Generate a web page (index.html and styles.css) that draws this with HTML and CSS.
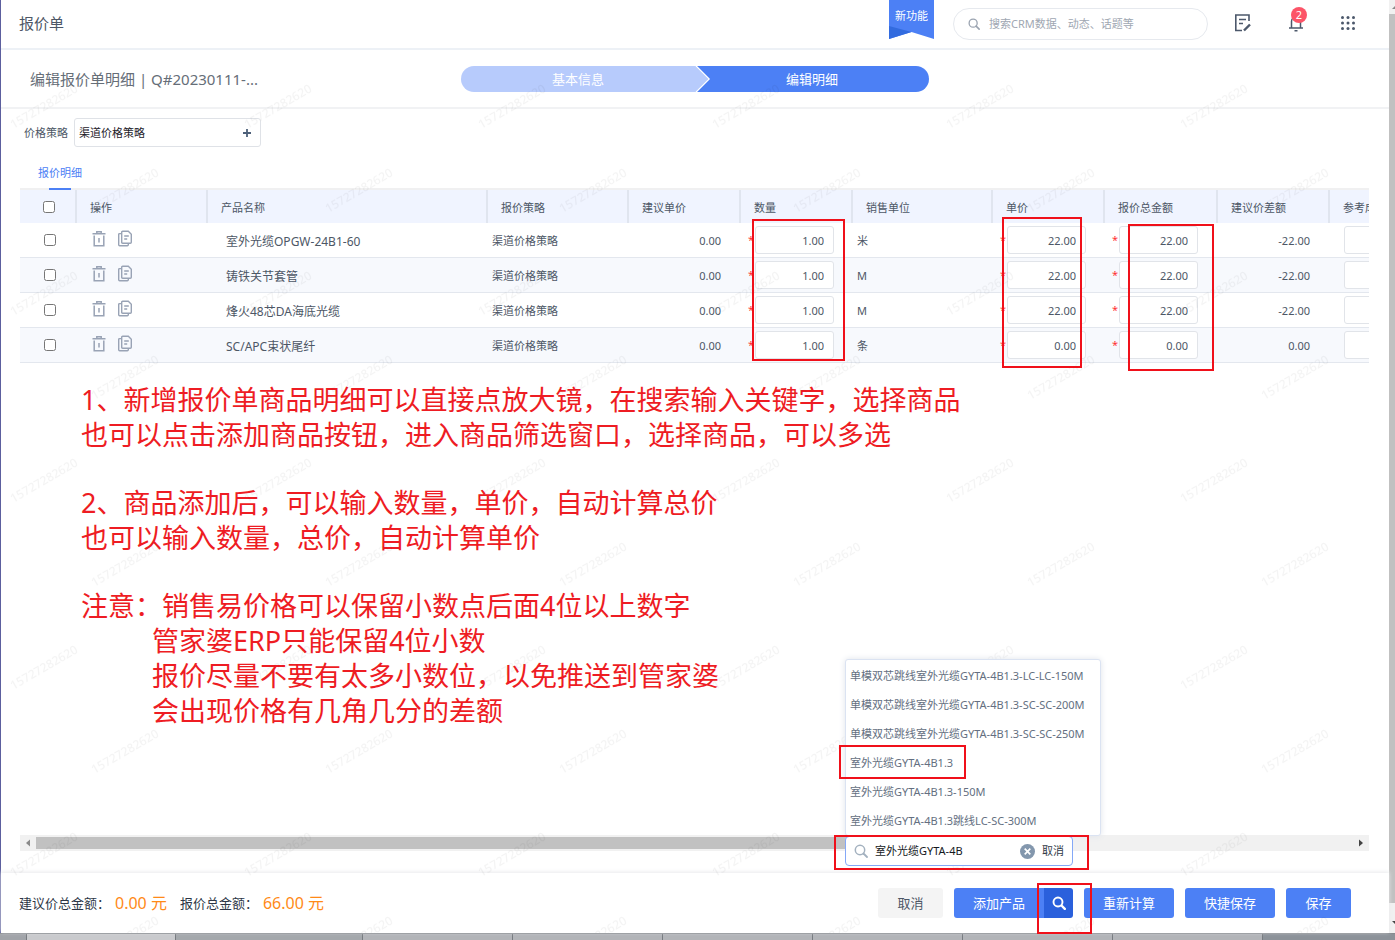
FILE: index.html
```html
<!DOCTYPE html>
<html lang="zh-CN">
<head>
<meta charset="utf-8">
<title>报价单</title>
<link rel="stylesheet" href="styles.css">
</head>
<body>
<svg class="defs" width="0" height="0" aria-hidden="true">
  <symbol id="trash" viewBox="0 0 14 17"><path d="M0.5 3.8h13M4.8 3.5V1.8h4.4v1.7M2.2 5.500v10.300h9.600V5.500M7 8v4.500" fill="none" stroke="#99a3b5" stroke-width="1.500"/></symbol>
  <symbol id="copy" viewBox="0 0 14 17"><path d="M3.700 2.200q0-1 1-1h5.600l3 3v8q0 1-1 1H4.700q-1 0-1-1zM3.500 3.600H1.700q-1 0-1 1v10.200q0 1 1 1h7.600q1 0 1-1v-1.500M6.200 6h4.600M6.200 9h3" fill="none" stroke="#99a3b5" stroke-width="1.400"/></symbol>
  <symbol id="lens" viewBox="0 0 14 14"><circle cx="6" cy="6" r="4.700" fill="none" stroke="currentColor" stroke-width="1.500"/><path d="M9.500 9.500l3.500 3.500" stroke="currentColor" stroke-width="1.800" stroke-linecap="round"/></symbol>
  <symbol id="lens-bold" viewBox="0 0 14 14"><circle cx="6" cy="6" r="4.500" fill="none" stroke="currentColor" stroke-width="1.900"/><path d="M9.500 9.500l3.300 3.300" stroke="currentColor" stroke-width="2.400" stroke-linecap="round"/></symbol>
</svg>
<div class="window">
  <div class="page">
    <header class="topbar">
      <h1 class="topbar-title">报价单</h1>
      <a class="ribbon" href="#">
        <svg width="45" height="39" aria-hidden="true"><path d="M0 0h45v39L22.500 32 0 39z" fill="#4c80f5"/><path d="M0 26l22.500 6L0 39z" fill="#326bdf"/></svg>
        <span>新功能</span>
      </a>
      <label class="global-search">
        <svg width="12" height="12" aria-hidden="true"><use href="#lens"/></svg>
        <input type="text" placeholder="搜索CRM数据、动态、话题等" aria-label="搜索">
      </label>
      <button class="icon-btn note" type="button" aria-label="记录">
        <svg width="18" height="18" viewBox="0 0 18 18" fill="none" stroke="#4c586b" stroke-width="1.600"><path d="M15 7V1H1.800v15.500H8M5 5.500h7M5 9.500h4"/><path d="M10 16.500l6-6" stroke-width="2.400"/></svg>
      </button>
      <button class="icon-btn bell" type="button" aria-label="通知">
        <svg width="16" height="18" viewBox="0 0 16 18" fill="none" stroke="#4c586b" stroke-width="1.500"><path d="M3.500 13.700V7.500a4.500 4.500 0 0 1 9 0v6.200M1 14h14M6.500 16.700h3"/></svg>
        <span class="badge">2</span>
      </button>
      <button class="icon-btn" type="button" aria-label="应用">
        <svg width="16" height="16" viewBox="0 0 16 16" fill="#4c586b"><circle cx="2.500" cy="2.500" r="1.500"/><circle cx="8" cy="2.500" r="1.500"/><circle cx="13.500" cy="2.500" r="1.500"/><circle cx="2.500" cy="8" r="1.500"/><circle cx="8" cy="8" r="1.500"/><circle cx="13.500" cy="8" r="1.500"/><circle cx="2.500" cy="13.500" r="1.500"/><circle cx="8" cy="13.500" r="1.500"/><circle cx="13.500" cy="13.500" r="1.500"/></svg>
      </button>
    </header>

    <section class="stepbar">
      <h2 class="doc-title">编辑报价单明细 | Q#20230111-...</h2>
      <ol class="steps">
        <li class="step">基本信息
          <svg class="chevron" width="16" height="26" aria-hidden="true"><path d="M0 0l13 13L0 26z" fill="#b7cbfc"/><path d="M0 -1l14 14L0 27" fill="none" stroke="#fff" stroke-width="1.500"/></svg>
        </li>
        <li class="step current">编辑明细</li>
      </ol>
    </section>

    <main class="content">
      <div class="policy">
        <label for="policy">价格策略</label>
        <div class="policy-box">
          <input id="policy" type="text" value="渠道价格策略">
          <button type="button" aria-label="展开"><svg width="8" height="8" viewBox="0 0 8 8"><path d="M4 0v8M0 4h8" stroke="#4d6079" stroke-width="1.800"/></svg></button>
        </div>
      </div>
      <nav class="tabs"><a class="tab" href="#">报价明细</a></nav>

      <div class="grid-area">
        <div class="grid-clip">
          <table class="grid">
            <colgroup><col class="c-check"><col class="c-ops"><col class="c-name"><col class="c-policy"><col class="c-num"><col class="c-num"><col class="c-unit"><col class="c-num"><col class="c-diff"><col class="c-num"><col class="c-num"></colgroup>
            <thead>
              <tr><th class="check"><input type="checkbox" aria-label="全选"></th><th>操作</th><th>产品名称</th><th>报价策略</th><th>建议单价</th><th>数量</th><th>销售单位</th><th>单价</th><th>报价总金额</th><th>建议价差额</th><th>参考成本</th></tr>
            </thead>
            <tbody></tbody>
          </table>
        </div>
        <div class="mark mark-qty"></div>
        <div class="mark mark-price"></div>
        <div class="mark mark-total"></div>
      </div>

      <div class="notes">
        <p>1、新增报价单商品明细可以直接点放大镜，在搜索输入关键字，选择商品<br>也可以点击添加商品按钮，进入商品筛选窗口，选择商品，可以多选</p>
        <p>2、商品添加后，可以输入数量，单价，自动计算总价<br>也可以输入数量，总价，自动计算单价</p>
        <p>注意：销售易价格可以保留小数点后面4位以上数字<span class="sub">管家婆ERP只能保留4位小数<br>报价尽量不要有太多小数位，以免推送到管家婆<br>会出现价格有几角几分的差额</span></p>
      </div>

      <div class="hscroll">
        <svg width="16" height="16" aria-hidden="true"><path d="M10 4.500v7L6 8z" fill="#8a8a8a"/></svg>
        <div class="hthumb"></div>
        <svg width="16" height="16" aria-hidden="true"><path d="M6 4.500v7L10 8z" fill="#444"/></svg>
      </div>
    </main>

    <footer class="footer">
      <div class="totals">
        <span>建议价总金额：</span><strong>0.00 元</strong>
        <span>报价总金额：</span><strong>66.00 元</strong>
      </div>
      <div class="actions">
        <button class="btn plain" type="button">取消</button>
        <div class="split">
          <button class="btn add" type="button">添加产品</button>
          <button class="btn find" type="button" aria-label="搜索产品"><svg width="14" height="14"><use href="#lens-bold"/></svg></button>
          <div class="mark mark-find"></div>
          <div class="lookup">
            <ul class="options">
              <li>单模双芯跳线室外光缆GYTA-4B1.3-LC-LC-150M</li>
              <li>单模双芯跳线室外光缆GYTA-4B1.3-SC-SC-200M</li>
              <li>单模双芯跳线室外光缆GYTA-4B1.3-SC-SC-250M</li>
              <li>室外光缆GYTA-4B1.3<div class="mark mark-option"></div></li>
              <li>室外光缆GYTA-4B1.3-150M</li>
              <li>室外光缆GYTA-4B1.3跳线LC-SC-300M</li>
            </ul>
            <div class="lookup-box">
              <svg width="14" height="14" aria-hidden="true"><use href="#lens"/></svg>
              <input type="text" value="室外光缆GYTA-4B" aria-label="产品关键字">
              <button type="button" aria-label="清除"><svg width="15" height="15" viewBox="0 0 15 15"><circle cx="7.500" cy="7.500" r="7.500" fill="#8397ad"/><path d="M4.700 4.700l5.600 5.600M10.300 4.700l-5.600 5.600" stroke="#fff" stroke-width="1.700"/></svg></button>
              <button type="button">取消</button>
              <div class="mark mark-lookup"></div>
            </div>
          </div>
        </div>
        <button class="btn" type="button">重新计算</button>
        <button class="btn" type="button">快捷保存</button>
        <button class="btn save" type="button">保存</button>
      </div>
    </footer>
    <svg class="watermark" width="100%" height="100%" aria-hidden="true">
      <defs>
        <pattern id="wm" x="0" y="0" width="234" height="187" patternUnits="userSpaceOnUse">
          <text class="wm-text" transform="translate(45 60) rotate(-30)">15727282620</text>
          <text class="wm-text" transform="translate(126 144) rotate(-30)">15727282620</text>
        </pattern>
      </defs>
      <rect width="100%" height="100%" fill="url(#wm)"/>
    </svg>
  </div>
  <div class="vscroll">
    <svg width="8" height="14" aria-hidden="true"><path d="M3 9l4-4 4 4z" fill="#8a8a8a"/></svg>
    <div class="vthumb"></div>
    <svg width="8" height="30" aria-hidden="true"><path d="M3 18h8l-4 4z" fill="#444"/></svg>
  </div>
</div>
<div class="taskbar"><i class="edge"></i><i class="lit"></i><i class="wide"></i><i></i><i></i><i></i><i></i><i></i><i></i><i class="rest"></i></div>
<script src="app.js"></script>
</body>
</html>
```
FILE: styles.css
```css
* { box-sizing: border-box; }
body {
  margin: 0;
  height: 100vh;
  display: flex;
  flex-direction: column;
  overflow: hidden;
  background: #fff;
  color: #4d5766;
  font: 11px/16px "Noto Sans", "Noto Sans CJK SC", sans-serif;
}
button, input { font: inherit; color: inherit; }
button { border: 0; padding: 0; background: none; cursor: pointer; }
input[type="text"] { border: 0; padding: 0; outline: 0; min-width: 0; background: none; }
svg { display: block; flex: none; }
ul, ol { list-style: none; margin: 0; padding: 0; }
a { color: inherit; text-decoration: none; }
.defs { position: absolute; }
.window { flex: 1; min-height: 0; display: flex; }
.page {
  position: relative;
  flex: 1;
  min-width: 0;
  display: flex;
  flex-direction: column;
  border-left: 1px solid #5c5f9e;
}

.topbar {
  display: flex;
  align-items: center;
  height: 50px;
  padding: 0 33px 3px 18px;
  border-bottom: 2px solid #edf1f6;
}
.topbar-title { flex: 1; margin: 0; font-size: 15px; font-weight: 400; line-height: 20px; }
.ribbon { position: relative; align-self: flex-start; margin-right: 19px; color: #fff; }
.ribbon span { position: absolute; top: 8px; left: 0; width: 100%; text-align: center; }
.global-search {
  display: flex;
  align-items: center;
  gap: 9px;
  width: 255px;
  height: 32px;
  margin: 3px 26px 0 0;
  padding: 0 14px;
  border: 1px solid #e6e9ee;
  border-radius: 16px;
  color: #9aa3b0;
}
.global-search input { flex: 1; }
.global-search input::placeholder { color: #a0a7b2; opacity: 1; }
.icon-btn { position: relative; margin-right: 36px; }
.icon-btn:last-child { margin-right: 0; }
.badge {
  position: absolute;
  top: -7px;
  left: 3px;
  width: 16px;
  height: 16px;
  border-radius: 8px;
  background: #fc5468;
  color: #fff;
}

.stepbar {
  position: relative;
  display: flex;
  align-items: center;
  justify-content: center;
  height: 59px;
  border-bottom: 2px solid #f1f2f4;
}
.doc-title {
  position: absolute;
  left: 29px;
  margin: 0;
  color: #666e78;
  font-size: 15px;
  font-weight: 400;
  line-height: 20px;
}
.steps { display: flex; width: 468px; color: #fff; font-size: 13px; line-height: 26px; text-align: center; }
.step { position: relative; flex: 1; border-radius: 13px 0 0 13px; background: #b7cbfc; }
.step.current { border-radius: 0 13px 13px 0; background: #4c80f5; }
.chevron { position: absolute; top: 0; right: -16px; z-index: 1; }

.content { flex: 1; min-height: 0; display: flex; flex-direction: column; padding: 9px 20px 22px 19px; }
.policy { display: flex; align-items: center; gap: 6px; padding-left: 4px; }
.policy-box {
  display: flex;
  width: 187px;
  height: 29px;
  padding: 0 9px 0 4px;
  border: 1px solid #dfe2e7;
  border-radius: 3px;
  color: #1d2128;
}
.policy-box input { flex: 1; }
.tabs { height: 43px; padding: 17px 0 0 18px; border-bottom: 2px solid #f0f0f1; }
.tab { position: relative; display: inline-block; height: 26px; line-height: 18px; color: #4c80f5; }
.tab::after { content: ""; position: absolute; left: 11px; right: 11px; bottom: 0; height: 2px; background: #4c80f5; }

.grid-area { position: relative; }
.grid-clip { overflow: hidden; }
.grid { width: 1422px; table-layout: fixed; border-collapse: separate; border-spacing: 0; }
.c-check { width: 57px; }
.c-ops { width: 131px; }
.c-name { width: 280px; }
.c-policy { width: 141px; }
.c-num { width: 112px; }
.c-unit { width: 140px; }
.c-diff { width: 113px; }
.grid th {
  height: 33px;
  padding: 2px 0 0 13px;
  border-right: 2px solid #e0e5ef;
  background: #f0f4ff;
  font-weight: 400;
  text-align: left;
}
.grid td { height: 35px; padding: 2px 0 0 4px; border-bottom: 1px solid #e3e7ee; }
.grid tr:nth-child(even) td { background: #f7f9fd; }
.grid .check { padding: 0 0 2px 3px; text-align: center; }
.check input { width: 12px; height: 12px; margin: 0; vertical-align: middle; }
.grid .name { padding: 4px 0 0 18px; font-size: 12px; }
.grid .amount { padding-right: 20px; text-align: right; }
.ops { display: flex; gap: 12px; padding: 0 0 4px 11px; }
.grid .entry { padding-top: 0; }
.field { display: flex; align-items: center; gap: 2px; padding-left: 3px; }
.field::before { content: "*"; width: 5px; color: #f33; }
.field.optional::before { content: ""; }
.grid .field input {
  width: 79px;
  height: 28px;
  padding-right: 9px;
  border: 1px solid #e1e4e9;
  border-radius: 3px;
  background: #fff;
  text-align: right;
}

.mark { position: absolute; z-index: 5; border: 2px solid #f0101a; pointer-events: none; }
.mark-qty { left: 732px; top: 29px; width: 93px; height: 142px; }
.mark-price { left: 982px; top: 27px; width: 80px; height: 151px; }
.mark-total { left: 1108px; top: 34px; width: 86px; height: 147px; }

.notes { padding: 19px 0 0 61px; color: #ee1c23; font-size: 27px; line-height: 35px; white-space: nowrap; }
.notes p { margin: 0 0 33px; }
.notes .sub { display: block; padding-left: 71px; }

.hscroll { display: flex; height: 16px; margin-top: auto; background: #f1f1f1; }
.hthumb { width: 62%; height: 12px; margin: 2px auto 2px 0; background: #c1c1c1; }

.footer {
  display: flex;
  align-items: center;
  justify-content: space-between;
  height: 60px;
  padding: 0 38px 0 18px;
  box-shadow: 0 -1px 4px #e9eaec;
}
.totals { display: flex; align-items: center; color: #2e3747; font-size: 13px; white-space: nowrap; }
.totals strong { margin: 0 13px 0 5px; color: #ff8a17; font-size: 16px; font-weight: 400; }
.actions { display: flex; gap: 11px; }
.btn { width: 90px; height: 30px; border-radius: 3px; background: #4c80f5; color: #fff; font-size: 13px; }
.btn.plain { width: 65px; background: #f4f4f4; color: #4d5766; }
.btn.save { width: 65px; }
.split { position: relative; display: flex; }
.btn.add { border-radius: 3px 0 0 3px; }
.btn.find { display: grid; place-items: center; width: 29px; border-radius: 0 3px 3px 0; background: #2a60dc; }
.mark-find { right: -19px; top: -5px; width: 55px; height: 51px; }

.lookup { position: absolute; right: 0; bottom: 52px; z-index: 5; width: 228px; color: #646f81; }
.options {
  width: 256px;
  padding: 1px 0 0;
  border: 1px solid #dbe3f2;
  border-radius: 3px;
  background: #fff;
  box-shadow: 0 0 6px #dfe3ea;
}
.options li { position: relative; padding-left: 4px; line-height: 29px; white-space: nowrap; }
.mark-option { left: -7px; top: -3px; width: 127px; height: 34px; }
.lookup-box {
  position: relative;
  display: flex;
  align-items: center;
  gap: 7px;
  height: 30px;
  padding: 0 8px 0 8px;
  border: 1px solid #84a8f7;
  border-radius: 4px;
  background: #fff;
  color: #313a48;
}
.lookup-box > svg { color: #a3b1bf; }
.lookup-box input { flex: 1; color: #15181d; }
.mark-lookup { left: -12px; top: -2px; width: 255px; height: 35px; }

.watermark { position: absolute; left: 0; top: 50px; height: calc(100% - 50px); z-index: 4; pointer-events: none; }
.wm-text { fill: #000; fill-opacity: .045; font-size: 12px; font-weight: 500; text-anchor: middle; }

.vscroll { display: flex; flex-direction: column; width: 6px; overflow: hidden; background: #f1f1f1; }
.vthumb { flex: 1; background: #c1c1c1; }
.taskbar { display: flex; height: 7px; border-top: 1px solid #868a8f; background: #8c9299; }
.taskbar i { width: 150px; border-right: 1px solid #777b80; background: #b2b4b8; }
.taskbar .edge { width: 27px; background: #a1a4a9; }
.taskbar .lit { width: 149px; background: #c9cacd; }
.taskbar .wide { width: 187px; background: #a4a8ac; }
.taskbar .rest { flex: 1; border: 0; background: #8c9299; }
```
FILE: app.js
```js
const rows = [
  ["室外光缆OPGW-24B1-60", "米", "22.00", "-22.00"],
  ["铸铁关节套管", "M", "22.00", "-22.00"],
  ["烽火48芯DA海底光缆", "M", "22.00", "-22.00"],
  ["SC/APC束状尾纤", "条", "0.00", "0.00"]
];
const field = (label, value) =>
  `<td class="entry"><div class="field"><input type="text" aria-label="${label}" value="${value}"></div></td>`;
document.querySelector(".grid tbody").innerHTML = rows.map(([name, unit, price, diff]) => `
  <tr>
    <td class="check"><input type="checkbox" aria-label="选择${name}"></td>
    <td class="entry"><div class="ops">
      <button type="button" aria-label="删除"><svg width="14" height="17"><use href="#trash"/></svg></button>
      <button type="button" aria-label="复制"><svg width="14" height="17"><use href="#copy"/></svg></button>
    </div></td>
    <td class="name">${name}</td>
    <td>渠道价格策略</td>
    <td class="amount">0.00</td>
    ${field("数量", "1.00")}
    <td>${unit}</td>
    ${field("单价", price)}
    ${field("报价总金额", price)}
    <td class="amount">${diff}</td>
    <td class="entry"><div class="field optional"><input type="text" aria-label="参考成本"></div></td>
  </tr>`).join("");
```
